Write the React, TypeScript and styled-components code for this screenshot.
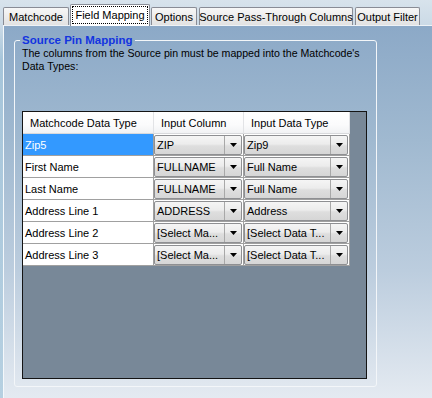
import React from 'react';
import styled, { createGlobalStyle } from 'styled-components';

const Global = createGlobalStyle`
  html, body { margin: 0; padding: 0; }
  body {
    width: 432px; height: 398px; overflow: hidden;
    font-family: "Liberation Sans", Arial, sans-serif; font-size: 11px; color: #000;
  }
`;

const Window = styled.div`
  width: 432px; height: 398px; display: flex; flex-direction: column; overflow: hidden;
  background: linear-gradient(to bottom, #d8e3ec 0px, #cbdae6 25px, #a6c5da 60px, #b6d0e1 100%);
`;

const TabStrip = styled.div`
  display: flex; align-items: flex-end; height: 25px; padding-left: 3px; gap: 2px;
  position: relative; z-index: 2;
`;

const Tab = styled.div<{ $w: number; $active?: boolean }>`
  box-sizing: border-box;
  width: ${p => (p.$active ? p.$w + 2 : p.$w)}px;
  height: ${p => (p.$active ? 22 : 18)}px;
  margin: ${p => (p.$active ? '0 -1px -1px -1px' : '0')};
  border: 1px solid #898c95; border-bottom: none;
  border-radius: 2px 2px 0 0;
  background: ${p => (p.$active ? '#ffffff' : 'linear-gradient(to bottom, #f7f7f7 0%, #ececec 50%, #e2e2e2 100%)')};
  display: flex; align-items: center; justify-content: center;
  padding: ${p => (p.$active ? '1px 1px 2px 1px' : '0')};
  white-space: nowrap;
`;

const FocusLabel = styled.span`
  flex: 1; align-self: stretch; display: flex; align-items: center; justify-content: center;
  outline: 1px dotted #000; outline-offset: -1px;
`;

const TabPage = styled.div`
  flex: 1; margin-left: 3px; box-sizing: border-box;
  border-left: 1px solid #f4f8fb; border-top: 1px solid #eef2f6;
  background: linear-gradient(to bottom, #8ca9c7 0px, #a0b9d0 115px, #bccdde 245px, #e4eaf1 372px);
  padding: 8px 0 0 10px;
`;

const GroupBox = styled.fieldset`
  box-sizing: border-box; width: 363px; height: 353px; margin: 0;
  border: 1px solid #f3f6f9; border-radius: 3px;
  padding: 0 7px 0 7px;
  display: flex; flex-direction: column;
`;

const Legend = styled.legend`
  font-weight: bold; color: #1334e0; padding: 0 2px; margin-left: -2px;
  font-size: 11.5px; line-height: 13px;
`;

const Description = styled.div`
  line-height: 13px; font-size: 10.6px; white-space: nowrap;
`;

const Grid = styled.div`
  box-sizing: border-box; width: 345px; height: 268px; margin-top: 38px;
  border: 1px solid #141414; background: #788898;
  display: grid; grid-template-columns: 131px 90px 106px; grid-auto-rows: 22px;
  align-content: start; justify-content: start;
`;

const HeaderCell = styled.div`
  box-sizing: border-box;
  background: linear-gradient(to bottom, #ffffff 0%, #fbfbfc 60%, #f1f2f4 100%);
  border-right: 1px solid #e2e3e6; border-bottom: 1px solid #d8d9dc;
  display: flex; align-items: center; padding-left: 7px; white-space: nowrap;
`;

const TextCell = styled.div<{ $selected?: boolean }>`
  box-sizing: border-box;
  background: ${p => (p.$selected ? '#3399ff' : '#ffffff')};
  color: ${p => (p.$selected ? '#ffffff' : '#000000')};
  border-right: 1px solid #a0a0a0; border-bottom: 1px solid #a0a0a0;
  display: flex; align-items: center; padding-left: 2px; white-space: nowrap;
`;

const ComboCell = styled.div`
  box-sizing: border-box; background: #ffffff;
  border-right: 1px solid #a0a0a0; border-bottom: 1px solid #a0a0a0;
  display: flex; padding: 1px 1px 0 0;
`;

const Combo = styled.div`
  flex: 1; display: flex; box-sizing: border-box;
  border: 1px solid #8e8f92; border-radius: 2px;
  background: linear-gradient(to bottom, #f5f5f5 0%, #ececec 45%, #dedede 55%, #d6d6d6 100%);
`;

const ComboText = styled.span`
  flex: 1; display: flex; align-items: center; padding-left: 2px; white-space: nowrap; overflow: hidden;
`;

const ComboArrow = styled.span`
  width: 16px; display: flex; align-items: center; justify-content: center;
  border-left: 1px solid #a8a8a8;
`;

const Arrow = () => (
  <svg width="7" height="4" viewBox="0 0 7 4"><polygon points="0,0 7,0 3.5,4" fill="#000" /></svg>
);

const rows = [
  { type: 'Zip5', col: 'ZIP', dt: 'Zip9', sel: true },
  { type: 'First Name', col: 'FULLNAME', dt: 'Full Name' },
  { type: 'Last Name', col: 'FULLNAME', dt: 'Full Name' },
  { type: 'Address Line 1', col: 'ADDRESS', dt: 'Address' },
  { type: 'Address Line 2', col: '[Select Ma...', dt: '[Select Data T...' },
  { type: 'Address Line 3', col: '[Select Ma...', dt: '[Select Data T...' },
];

const tabs = [
  { label: 'Matchcode', w: 66 },
  { label: 'Field Mapping', w: 78, active: true },
  { label: 'Options', w: 46 },
  { label: 'Source Pass-Through Columns', w: 154 },
  { label: 'Output Filter', w: 65 },
];

export default function App() {
  return (
    <Window>
      <Global />
      <TabStrip>
        {tabs.map(t => (
          <Tab key={t.label} $w={t.w} $active={t.active}>
            {t.active ? <FocusLabel>{t.label}</FocusLabel> : t.label}
          </Tab>
        ))}
      </TabStrip>
      <TabPage>
        <GroupBox>
          <Legend>Source Pin Mapping</Legend>
          <Description>
            The columns from the Source pin must be mapped into the Matchcode's
            <br />
            Data Types:
          </Description>
          <Grid>
            <HeaderCell>Matchcode Data Type</HeaderCell>
            <HeaderCell>Input Column</HeaderCell>
            <HeaderCell>Input Data Type</HeaderCell>
            {rows.map(r => (
              <React.Fragment key={r.type}>
                <TextCell $selected={r.sel}>{r.type}</TextCell>
                <ComboCell>
                  <Combo>
                    <ComboText>{r.col}</ComboText>
                    <ComboArrow><Arrow /></ComboArrow>
                  </Combo>
                </ComboCell>
                <ComboCell>
                  <Combo>
                    <ComboText>{r.dt}</ComboText>
                    <ComboArrow><Arrow /></ComboArrow>
                  </Combo>
                </ComboCell>
              </React.Fragment>
            ))}
          </Grid>
        </GroupBox>
      </TabPage>
    </Window>
  );
}
